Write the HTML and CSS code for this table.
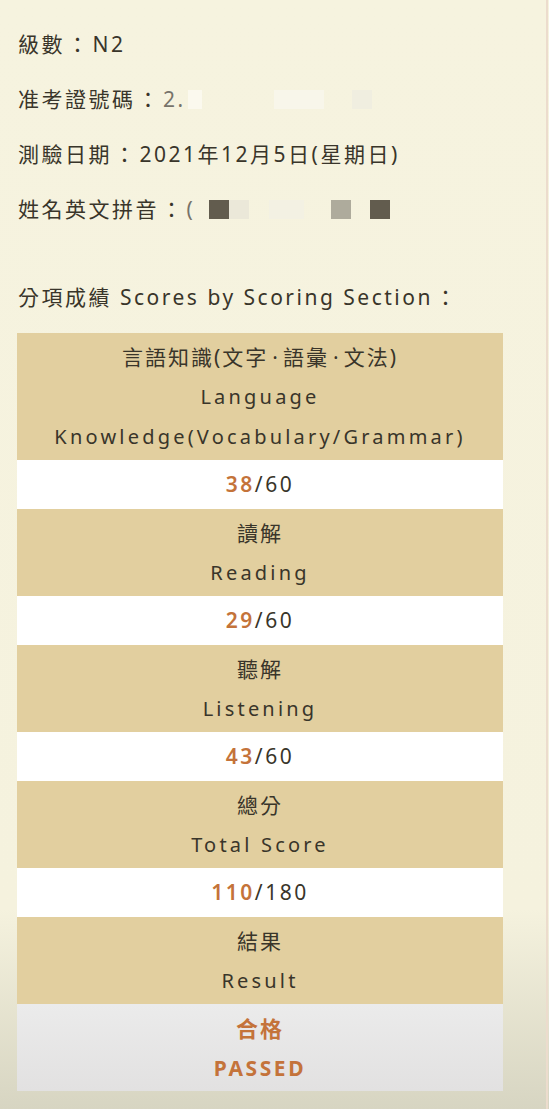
FILE: index.html
```html
<!DOCTYPE html>
<html lang="zh-Hant">
<head>
    <meta charset="UTF-8">
    <meta name="viewport" content="width=device-width, initial-scale=1.0">
    <title>成績</title>
    <link rel="stylesheet" href="styles.css">
</head>
<body>
    <div class="card">
        <div class="info">
            <p>級數<span class="colon">：</span>N2</p>
            <p>准考證號碼<span class="colon">：</span><span class="cut">2.</span><span class="blur b1"></span><span class="blur b2"></span><span class="blur b3"></span></p>
            <p>測驗日期<span class="colon">：</span>2021年12月5日(星期日)</p>
            <p>姓名英文拼音<span class="colon">：</span><span class="cut">(</span><span class="blot dark first"></span><span class="blot pale"></span><span class="blot pale wide"></span><span class="blot grey"></span><span class="blot dark last"></span></p>
            <p class="section">分項成績 Scores by Scoring Section<span class="colon">：</span></p>
        </div>

        <div class="scores">
            <div class="head">
                <div class="zh">言語知識(文字<span class="dot">·</span>語彙<span class="dot">·</span>文法)</div>
                <div class="en">Language</div>
                <div class="en">Knowledge(Vocabulary/Grammar)</div>
            </div>
            <div class="val"><b>38</b>/60</div>
            <div class="head">
                <div class="zh">讀解</div>
                <div class="en">Reading</div>
            </div>
            <div class="val"><b>29</b>/60</div>
            <div class="head">
                <div class="zh">聽解</div>
                <div class="en">Listening</div>
            </div>
            <div class="val"><b>43</b>/60</div>
            <div class="head">
                <div class="zh">總分</div>
                <div class="en">Total Score</div>
            </div>
            <div class="val"><b>110</b>/180</div>
            <div class="head">
                <div class="zh">結果</div>
                <div class="en">Result</div>
            </div>
            <div class="val result">
                <div class="zh">合格</div>
                <div class="en">PASSED</div>
            </div>
        </div>
    </div>
</body>
</html>
```

FILE: styles.css
```css
body {
    margin: 0;
    background: linear-gradient(180deg, #f6f3df 0%, #f5f2de 82%, #d7d5c2 100%);
    color: #39352a;
    font-family: "Noto Sans", "Noto Sans CJK TC", sans-serif;
    min-height: 1109px;
}
.card {
    width: 548px;
    min-height: 1109px;
    border-right: 2px solid #ecdccd;
    box-sizing: border-box;
}
.info { padding: 17px 0 0 18px; }
.info p {
    margin: 0;
    font-size: 21px;
    line-height: 55px;
    letter-spacing: 2.5px;
    white-space: nowrap;
}
.info p.section { margin-top: 33px; }
.colon {
    display: inline-block;
    padding-left: 2px;
    margin-right: 2px;
}
.cut { color: #77736a; }
.blur, .blot {
    display: inline-block;
    height: 19px;
    vertical-align: -2px;
}
.blur { background: #fbf9ee; }
.b1 { width: 14px; margin-left: 2px; }
.b2 { width: 50px; margin-left: 72px; background: #f8f6ea; }
.b3 { width: 20px; margin-left: 28px; background: #f0eee0; }
.blot { width: 20px; }
.blot.dark { background: #625c4e; }
.blot.first { margin-left: 14px; }
.blot.last { margin-left: 19px; }
.blot.pale { background: #ebe8d9; }
.blot.pale.wide { width: 35px; margin-left: 20px; background: #f3f1e3; }
.blot.grey { background: #aeab9c; margin-left: 27px; }

.scores {
    margin: 8px 0 0 17px;
    width: 486px;
    text-align: center;
    line-height: 40px;
}
.zh {
    font-size: 21px;
    letter-spacing: 2px;
}
.dot { margin: 0 3px 0 4px; }
.en {
    font-size: 20px;
    letter-spacing: 3.2px;
}
.head {
    background: #e2cf9f;
    padding: 4px 0 3px;
}
.val {
    background: #fff;
    padding: 4px 0 5px;
    font-size: 21px;
    letter-spacing: 2.5px;
}
.val b {
    color: #c4733a;
    font-weight: 600;
}
.val.result {
    background: linear-gradient(180deg, #ebebeb, #e2e1e1);
    color: #c4733a;
    font-weight: 700;
    padding: 4px 0 3px;
}
.val.result .zh { font-size: 22px; }
.val.result .en {
    font-size: 21px;
    letter-spacing: 2.6px;
}
```
